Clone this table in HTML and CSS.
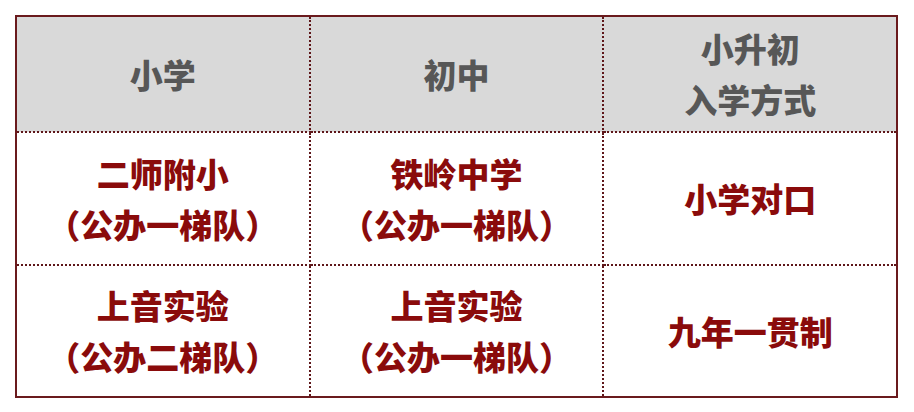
FILE: index.html
```html
<!DOCTYPE html>
<html lang="zh-CN">
<head>
<meta charset="utf-8">
<link rel="stylesheet" href="styles.css">
</head>
<body>
<table class="grid">
  <tr class="head">
    <td>小学</td>
    <td>初中</td>
    <td>小升初<br>入学方式</td>
  </tr>
  <tr class="row row-a">
    <td>二师附小<br>（公办一梯队）</td>
    <td>铁岭中学<br>（公办一梯队）</td>
    <td>小学对口</td>
  </tr>
  <tr class="row row-b">
    <td>上音实验<br>（公办二梯队）</td>
    <td>上音实验<br>（公办一梯队）</td>
    <td>九年一贯制</td>
  </tr>
</table>
</body>
</html>
```
FILE: styles.css
```css
html, body {
  margin: 0;
  padding: 0;
  background: #ffffff;
}
body {
  padding: 15px;
  font-family: "Noto Sans CJK SC", "Noto Sans", sans-serif;
}
.grid {
  width: 883px;
  border-collapse: collapse;
  table-layout: fixed;
  border: 2px solid #6a1a1d;
}
.grid td {
  border: 2px dotted #5e1619;
  text-align: center;
  vertical-align: middle;
  font-weight: 900;
  font-size: 33px;
  line-height: 51px;
  padding: 0;
}
.head td {
  background: #d9d9d9;
  color: #575757;
  height: 114px;
}
.row td {
  color: #8a0b0b;
}
.row-a td {
  height: 131px;
}
.row-b td {
  height: 130px;
}
```
